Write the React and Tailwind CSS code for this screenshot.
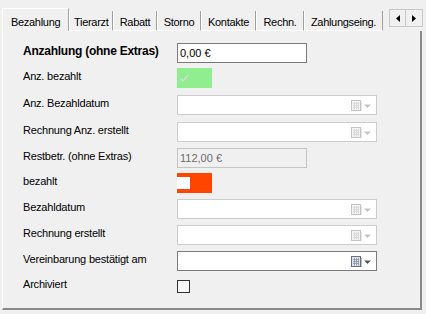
import React from 'react';

const tabs = [
    { label: 'Bezahlung', w: 'w-[67px]', active: true },
    { label: 'Tierarzt', w: 'w-[44px]' },
    { label: 'Rabatt', w: 'w-[44px]' },
    { label: 'Storno', w: 'w-[44px]' },
    { label: 'Kontakte', w: 'w-[55px]' },
    { label: 'Rechn.', w: 'w-[48px]' },
    { label: 'Zahlungseing.', w: 'w-[79px]' },
];

const CalendarIcon = ({ enabled }) => {
    const frame = enabled ? '#6b6f7a' : '#c4c4c4';
    const fill = enabled ? '#dfe3ea' : '#f4f4f4';
    const grid = enabled ? '#8a93a8' : '#d6d6d6';
    const arrow = enabled ? '#4d5a6e' : '#c4c4c4';
    return (
        <svg width="22" height="13" viewBox="0 0 22 13">
            <rect x="1.5" y="1.5" width="9" height="10" fill={fill} stroke={frame} />
            <rect x="11" y="3" width="1" height="9" fill={enabled ? '#b8bcc4' : '#e4e4e4'} />
            <path d="M3 4.5h6M3 6.5h6M3 8.5h6M4.5 3v7.5M6.5 3v7.5M8.5 3v7.5" stroke={grid} strokeWidth="0.8" />
            <path d="M14 5.5h7l-3.5 3.5z" fill={arrow} />
        </svg>
    );
};

const DateInput = ({ enabled }) => (
    <div
        className={`w-[200px] h-[20px] bg-white border flex items-center justify-end pr-[4px] ${enabled ? 'border-[#7a7a7a]' : 'border-[#cccccc]'}`}
    >
        <CalendarIcon enabled={enabled} />
    </div>
);

const Row = ({ label, bold, mt, children }) => (
    <div className={`flex items-center h-[20px] ${mt}`}>
        <div
            className={`w-[154px] shrink-0 whitespace-nowrap ${bold ? 'mb-[4px] font-bold text-[12px] tracking-[-0.25px]' : 'mb-[3px] tracking-[-0.2px]'}`}
        >
            {label}
        </div>
        {children}
    </div>
);

export default function App() {
    return (
        <div className="w-[426px] h-[314px] bg-[#f0f0f0] overflow-hidden text-[11px] text-black font-['Liberation_Sans',Arial,sans-serif]">
            {/* Tab strip */}
            <div className="flex items-end h-[31px] pt-[8px] pl-[2px]">
                {tabs.map((t) =>
                    t.active ? (
                        <div
                            key={t.label}
                            className={`${t.w} h-[23px] pt-[5px] px-[8px] bg-[#f0f0f0] border-l border-t border-white border-r border-r-[#a0a0a0] tracking-[-0.3px] whitespace-nowrap`}
                        >
                            {t.label}
                        </div>
                    ) : (
                        <div
                            key={t.label}
                            className={`${t.w} h-[20px] pt-[3px] px-[4px] border-l border-l-white border-r border-r-[#a0a0a0] border-b border-b-white tracking-[-0.3px] whitespace-nowrap text-center`}
                        >
                            {t.label}
                        </div>
                    )
                )}
                <div className="self-start mt-[1px] ml-[6px] flex h-[18px] border border-[#c8c8c8] bg-[#f0f0f0]">
                    <div className="w-[16px] flex items-center justify-center border-r border-[#c8c8c8]">
                        <svg width="4" height="7" viewBox="0 0 4 7">
                            <path d="M4 0v7L0 3.5z" fill="#000" />
                        </svg>
                    </div>
                    <div className="w-[16px] flex items-center justify-center">
                        <svg width="4" height="7" viewBox="0 0 4 7">
                            <path d="M0 0v7l4-3.5z" fill="#000" />
                        </svg>
                    </div>
                </div>
            </div>

            {/* Panel */}
            <div className="ml-[2px] w-[420px] h-[279px] border-l border-l-white border-r-2 border-r-[#8a8a8a] border-b-2 border-b-[#8a8a8a] pl-[20px] pt-[12px]">
                <Row label="Anzahlung (ohne Extras)" bold mt="mt-0">
                    <div className="w-[130px] h-[20px] bg-white border border-[#7a7a7a] flex items-center pl-[2px]">
                        0,00 €
                    </div>
                </Row>
                <Row label="Anz. bezahlt" mt="mt-[5px]">
                    <div className="w-[35px] h-[20px] bg-[#90ee90] flex items-center">
                        <svg width="13" height="13" viewBox="0 0 13 13" className="ml-[1px]">
                            <path d="M2.5 6.5l2.5 2.5 5.5-6" fill="none" stroke="#d4dcd4" strokeWidth="1.5" />
                        </svg>
                    </div>
                </Row>
                <Row label="Anz. Bezahldatum" mt="mt-[7px]">
                    <DateInput />
                </Row>
                <Row label="Rechnung Anz. erstellt" mt="mt-[7px]">
                    <DateInput />
                </Row>
                <Row label="Restbetr. (ohne Extras)" mt="mt-[6px]">
                    <div className="w-[130px] h-[20px] bg-[#f0f0f0] border border-[#c4c4c4] flex items-center pl-[2px] text-[#6d6d6d]">
                        112,00 €
                    </div>
                </Row>
                <Row label="bezahlt" mt="mt-[5px]">
                    <div className="w-[35px] h-[20px] bg-[#ff4500] flex items-center">
                        <div className="w-[13px] h-[12px] bg-white" />
                    </div>
                </Row>
                <Row label="Bezahldatum" mt="mt-[6px]">
                    <DateInput />
                </Row>
                <Row label="Rechnung erstellt" mt="mt-[6px]">
                    <DateInput />
                </Row>
                <Row label="Vereinbarung bestätigt am" mt="mt-[6px]">
                    <DateInput enabled />
                </Row>
                <Row label="Archiviert" mt="mt-[5px]">
                    <div className="w-[13px] h-[13px] bg-[#f8f8f8] border border-[#333333]" />
                </Row>
            </div>
        </div>
    );
}
